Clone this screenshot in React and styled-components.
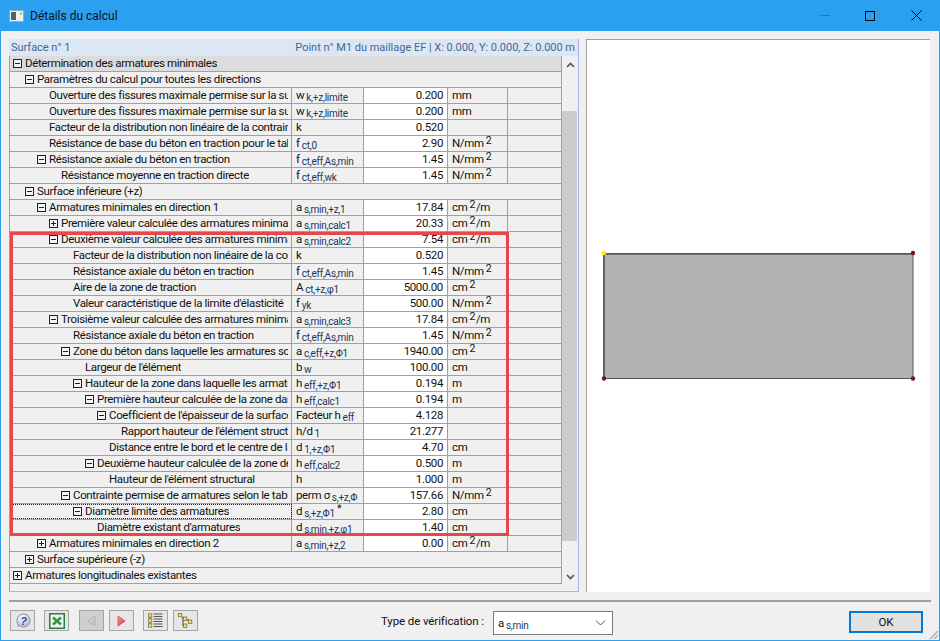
import React from 'react';
import styled, { createGlobalStyle } from 'styled-components';

const GlobalStyle = createGlobalStyle`
  html, body {
    margin: 0;
    padding: 0;
    background: #f0f0f0;
  }
`;

const Window = styled.div`
  box-sizing: border-box;
  width: 940px;
  height: 641px;
  display: flex;
  flex-direction: column;
  position: relative;
  overflow: hidden;
  background: #f0f0f0;
  border: 1px solid #2b9ff0;
  border-top: 0;
  font-family: 'Roboto', 'Liberation Sans', sans-serif;
  font-size: 11.5px;
  letter-spacing: -0.35px;
  color: #111;
`;

const TitleBar = styled.div`
  height: 31px;
  margin: 0 -1px;
  flex: none;
  display: flex;
  align-items: center;
  padding: 0 1px 0 9px;
  background: #2b9ff0;
  font-size: 12px;
  letter-spacing: 0;
`;

const TitleText = styled.span`
  margin-left: 6px;
  flex: 1;
`;

const WinButton = styled.div`
  width: 46px;
  height: 31px;
  display: flex;
  align-items: center;
  justify-content: center;
`;

const Main = styled.div`
  flex: none;
  height: 561px;
  display: flex;
  padding: 8px 9px 0 8px;
  box-sizing: border-box;
  gap: 7px;
`;

const LeftPane = styled.div`
  width: 570px;
  height: 553px;
  box-sizing: border-box;
  flex: none;
  display: flex;
  flex-direction: column;
  border-right: 1px solid #a9b4ec;
  border-bottom: 1px solid #a9b4ec;
`;

const InfoBar = styled.div`
  height: 17px;
  flex: none;
  display: flex;
  justify-content: space-between;
  align-items: center;
  padding: 0 3px 0 2px;
  background: #dce7f5;
  color: #46688f;
  font-size: 11px;
  letter-spacing: -0.02px;
  white-space: nowrap;
`;

const TableWrap = styled.div`
  display: flex;
  flex: 1;
  position: relative;
`;

const Table = styled.div`
  width: 553px;
  flex: none;
  border-left: 1px solid #a0a0a0;
  box-sizing: border-box;
`;

const Row = styled.div`
  height: 16px;
  box-sizing: border-box;
  display: grid;
  grid-template-columns: 282px 72px 84px 60px 1fr;
  border-bottom: 1px solid #a0a0a0;
  border-right: 1px solid #a0a0a0;
  background: ${p => (p.$head ? '#dcdcdc' : '#f0f0f0')};
  line-height: 15px;
`;

const TreeCell = styled.div`
  grid-column: ${p => (p.$span ? '1 / -1' : 'auto')};
  display: flex;
  align-items: center;
  padding-left: ${p => 3 + p.$level * 12}px;
  border-right: ${p => (p.$span ? '0' : '1px solid #a0a0a0')};
  outline: ${p => (p.$focus ? '1px dotted #222' : '0')};
  outline-offset: -1px;
  overflow: hidden;
  white-space: nowrap;
  min-width: 0;
`;

const ToggleSlot = styled.span`
  width: 12px;
  flex: none;
  display: flex;
  align-items: center;
`;

const Toggle = styled.svg`
  width: 9px;
  height: 9px;
  display: block;
`;

const LabelText = styled.span`
  overflow: hidden;
  min-width: 0;
  margin-right: 3px;
`;

const SymbolCell = styled.div`
  border-right: 1px solid #a0a0a0;
  padding-left: 4px;
  white-space: nowrap;
  overflow: hidden;
`;

const ValueCell = styled.div`
  border-right: 1px solid #a0a0a0;
  background: #fff;
  text-align: right;
  padding-right: 4px;
`;

const UnitCell = styled.div`
  border-right: 1px solid #a0a0a0;
  padding-left: 4px;
  white-space: nowrap;
`;

const EmptyCell = styled.div``;

const Sub = styled.span`
  font-size: 10px;
  position: relative;
  top: 2px;
  margin-left: 2px;
  letter-spacing: -0.25px;
  color: #1d3560;
`;

const Sup = styled.span`
  font-size: 10.5px;
  position: relative;
  top: -3px;
  margin: 0 1px 0 2px;
`;

const Highlight = styled.div`
  position: absolute;
  left: 1px;
  top: 176px;
  width: 499px;
  height: 304px;
  box-sizing: border-box;
  border: 3px solid #e8474a;
  pointer-events: none;
`;

const ScrollBar = styled.div`
  flex: 1;
  display: flex;
  flex-direction: column;
  align-items: center;
  justify-content: space-between;
  padding-bottom: 6px;
`;

const ScrollBtn = styled.div`
  height: 17px;
  display: flex;
  align-items: center;
  justify-content: center;
`;

const ScrollTrack = styled.div`
  flex: 1;
  width: 100%;
  padding: 38px 1px 27px 0;
  box-sizing: border-box;
`;

const ScrollThumb = styled.div`
  height: 100%;
  background: #cdcdcd;
`;

const Preview = styled.div`
  width: 344px;
  height: 553px;
  box-sizing: border-box;
  flex: none;
  background: #fff;
  border-top: 1px solid #a0a0a0;
  border-left: 1px solid #a0a0a0;
  display: flex;
  align-items: center;
  justify-content: center;
`;

const Footer = styled.div`
  flex: 1;
  margin: 8px 8px 0;
  border-top: 2px solid #a0a0a0;
  display: flex;
  align-items: flex-start;
  padding: 8px 0 0 1px;
`;

const ToolGroup = styled.div`
  display: flex;
  margin-right: ${p => p.$after || 0}px;
  gap: ${p => p.$gap || 0}px;
`;

const ToolButton = styled.div`
  width: 25px;
  height: 21px;
  box-sizing: border-box;
  border: 1px solid #a4a4a4;
  background: ${p => (p.$off ? '#cfcfcf' : '#e6e6e6')};
  display: flex;
  align-items: center;
  justify-content: center;
`;

const ComboLabel = styled.label`
  margin-left: 183px;
  margin-top: 4px;
  width: 112px;
  letter-spacing: -0.1px;
`;

const Combo = styled.div`
  width: 120px;
  height: 24px;
  margin-top: 1px;
  box-sizing: border-box;
  border: 1px solid #7a7a7a;
  background: #fff;
  display: flex;
  align-items: center;
  justify-content: space-between;
  padding: 0 6px 0 4px;
  line-height: 20px;
`;

const OkButton = styled.button`
  width: 74px;
  height: 22px;
  margin: 1px 8px 0 auto;
  box-sizing: border-box;
  border: 2px solid #0078d7;
  background: #e1e1e1;
  font: inherit;
  letter-spacing: 0;
  color: #111;
  padding: 0;
`;

const Grip = styled.svg`
  position: absolute;
  right: 0;
  bottom: 0;
  width: 12px;
  height: 12px;
`;

const s = (base, sub) => (
  <>
    {base}
    <Sub>{sub}</Sub>
  </>
);

const NMM = <>N/mm<Sup>2</Sup></>;
const CM2 = <>cm<Sup>2</Sup></>;
const CM2M = <>cm<Sup>2</Sup>/m</>;

const rows = [
  { level: 0, t: 'minus', label: 'Détermination des armatures minimales', head: true },
  { level: 1, t: 'minus', label: 'Paramètres du calcul pour toutes les directions' },
  { level: 2, label: 'Ouverture des fissures maximale permise sur la surface', sym: s('w', 'k,+z,limite'), val: '0.200', unit: 'mm' },
  { level: 2, label: 'Ouverture des fissures maximale permise sur la surface', sym: s('w', 'k,+z,limite'), val: '0.200', unit: 'mm' },
  { level: 2, label: 'Facteur de la distribution non linéaire de la contrainte', sym: 'k', val: '0.520' },
  { level: 2, label: 'Résistance de base du béton en traction pour le tableau', sym: s('f', 'ct,0'), val: '2.90', unit: NMM },
  { level: 2, t: 'minus', label: 'Résistance axiale du béton en traction', sym: s('f', 'ct,eff,As,min'), val: '1.45', unit: NMM },
  { level: 3, label: 'Résistance moyenne en traction directe', sym: s('f', 'ct,eff,wk'), val: '1.45', unit: NMM },
  { level: 1, t: 'minus', label: 'Surface inférieure (+z)' },
  { level: 2, t: 'minus', label: 'Armatures minimales en direction 1', sym: s('a', 's,min,+z,1'), val: '17.84', unit: CM2M },
  { level: 3, t: 'plus', label: 'Première valeur calculée des armatures minimales', sym: s('a', 's,min,calc1'), val: '20.33', unit: CM2M },
  { level: 3, t: 'minus', label: 'Deuxième valeur calculée des armatures minimales', sym: s('a', 's,min,calc2'), val: '7.54', unit: CM2M },
  { level: 4, label: 'Facteur de la distribution non linéaire de la contrainte', sym: 'k', val: '0.520' },
  { level: 4, label: 'Résistance axiale du béton en traction', sym: s('f', 'ct,eff,As,min'), val: '1.45', unit: NMM },
  { level: 4, label: 'Aire de la zone de traction', sym: s('A', 'ct,+z,φ1'), val: '5000.00', unit: CM2 },
  { level: 4, label: "Valeur caractéristique de la limite d'élasticité", sym: s('f', 'yk'), val: '500.00', unit: NMM },
  { level: 3, t: 'minus', label: 'Troisième valeur calculée des armatures minimales', sym: s('a', 's,min,calc3'), val: '17.84', unit: CM2M },
  { level: 4, label: 'Résistance axiale du béton en traction', sym: s('f', 'ct,eff,As,min'), val: '1.45', unit: NMM },
  { level: 4, t: 'minus', label: 'Zone du béton dans laquelle les armatures sont', sym: s('a', 'c,eff,+z,Φ1'), val: '1940.00', unit: CM2 },
  { level: 5, label: "Largeur de l'élément", sym: s('b', 'w'), val: '100.00', unit: 'cm' },
  { level: 5, t: 'minus', label: 'Hauteur de la zone dans laquelle les armatures', sym: s('h', 'eff,+z,Φ1'), val: '0.194', unit: 'm' },
  { level: 6, t: 'minus', label: 'Première hauteur calculée de la zone dans', sym: s('h', 'eff,calc1'), val: '0.194', unit: 'm' },
  { level: 7, t: 'minus', label: "Coefficient de l'épaisseur de la surface", sym: s('Facteur h', 'eff'), val: '4.128' },
  { level: 8, label: "Rapport hauteur de l'élément structural", sym: s('h/d', '1'), val: '21.277' },
  { level: 7, label: 'Distance entre le bord et le centre de la', sym: s('d', '1,+z,Φ1'), val: '4.70', unit: 'cm' },
  { level: 6, t: 'minus', label: 'Deuxième hauteur calculée de la zone de', sym: s('h', 'eff,calc2'), val: '0.500', unit: 'm' },
  { level: 7, label: "Hauteur de l'élément structural", sym: 'h', val: '1.000', unit: 'm' },
  { level: 4, t: 'minus', label: 'Contrainte permise de armatures selon le tableau', sym: <>perm σ<Sub>s,+z,Φ</Sub></>, val: '157.66', unit: NMM },
  { level: 5, t: 'minus', label: 'Diamètre limite des armatures', sym: <>d<Sub>s,+z,Φ1</Sub><Sup>*</Sup></>, val: '2.80', unit: 'cm', focus: true },
  { level: 6, label: "Diamètre existant d'armatures", sym: s('d', 's,min,+z,φ1'), val: '1.40', unit: 'cm' },
  { level: 2, t: 'plus', label: 'Armatures minimales en direction 2', sym: s('a', 's,min,+z,2'), val: '0.00', unit: CM2M },
  { level: 1, t: 'plus', label: 'Surface supérieure (-z)' },
  { level: 0, t: 'plus', label: 'Armatures longitudinales existantes' },
];

const TreeToggle = ({ type }) => (
  <Toggle viewBox="0 0 9 9">
    <rect x="0.5" y="0.5" width="8" height="8" fill="#f4f4f4" stroke="#222" />
    <path d={type === 'plus' ? 'M2 4.5h5M4.5 2v5' : 'M2 4.5h5'} stroke="#222" fill="none" />
  </Toggle>
);

const TableRow = ({ row }) => {
  const span = row.val === undefined;
  return (
    <Row $head={row.head}>
      <TreeCell $level={row.level} $span={span} $focus={row.focus}>
        <ToggleSlot>{row.t && <TreeToggle type={row.t} />}</ToggleSlot>
        <LabelText>{row.label}</LabelText>
      </TreeCell>
      {!span && (
        <>
          <SymbolCell>{row.sym}</SymbolCell>
          <ValueCell>{row.val}</ValueCell>
          <UnitCell>{row.unit}</UnitCell>
          <EmptyCell />
        </>
      )}
    </Row>
  );
};

const Chevron = ({ up }) => (
  <svg width="9" height="6" viewBox="0 0 9 6">
    <path d={up ? 'M1 5l3.5-3.5L8 5' : 'M1 1l3.5 3.5L8 1'} fill="none" stroke="#555" strokeWidth="1.6" />
  </svg>
);

const AppIcon = () => (
  <svg width="15" height="14" viewBox="0 0 15 14">
    <rect x="0.5" y="1.5" width="14" height="11" fill="#eef2f2" stroke="#9aa" />
    <rect x="2" y="3" width="5" height="8" fill="#3f6f66" />
    <rect x="11" y="3" width="2" height="3" fill="#9cc" />
  </svg>
);

const HelpIcon = () => (
  <svg width="16" height="16" viewBox="0 0 16 16">
    <defs>
      <radialGradient id="helpGlow" cx="0.4" cy="0.3" r="0.8">
        <stop offset="0" stopColor="#ffffff" />
        <stop offset="1" stopColor="#a9b2c4" />
      </radialGradient>
    </defs>
    <path d="M2 14l1.2-3.2 2.2 1.8z" fill="#8f99ad" />
    <circle cx="8.5" cy="7.5" r="6.6" fill="url(#helpGlow)" stroke="#8a94a8" />
    <text x="8.5" y="11.5" textAnchor="middle" fontFamily="Liberation Sans, sans-serif" fontWeight="700" fontStyle="italic" fontSize="11" fill="#2b4a9a">?</text>
  </svg>
);

const ExcelIcon = () => (
  <svg width="16" height="16" viewBox="0 0 16 16">
    <rect x="0.75" y="0.75" width="14.5" height="14.5" fill="#edf5ea" stroke="#2a7d3a" strokeWidth="1.5" />
    <path d="M4 4.5l8 7M12 4.5l-8 7" stroke="#2f9a48" strokeWidth="2.6" />
  </svg>
);

const Triangle = ({ left, id, from, to, edge }) => (
  <svg width="9" height="12" viewBox="0 0 9 12">
    <defs>
      <linearGradient id={id} x1="0" y1="0" x2="1" y2="1">
        <stop offset="0" stopColor={from} />
        <stop offset="1" stopColor={to} />
      </linearGradient>
    </defs>
    <path d={left ? 'M8 1v10L1 6z' : 'M1 1v10l7-5z'} fill={`url(#${id})`} stroke={edge} strokeWidth="0.8" />
  </svg>
);

const Node = ({ x, y }) => (
  <rect x={x} y={y} width="3.4" height="3.4" fill="#f2e27a" stroke="#7d7232" strokeWidth="0.8" />
);

const ListIcon = () => (
  <svg width="15" height="15" viewBox="0 0 15 15">
    <path d="M2 2v11" stroke="#555" />
    {[0.8, 5.8, 10.8].map(y => (
      <g key={y}>
        <Node x={0.4} y={y} />
        <path d={`M5.5 ${y + 0.2}h9M5.5 ${y + 2.7}h9`} stroke="#555" />
      </g>
    ))}
  </svg>
);

const TreeIcon = () => (
  <svg width="15" height="15" viewBox="0 0 15 15">
    <path d="M2 2l3 3v8h2M5 5l2 0.5 5 2.5" fill="none" stroke="#444" />
    <Node x={0.4} y={0.4} />
    <Node x={5.4} y={4} />
    <Node x={10.4} y={7} />
    <Node x={5.4} y={11} />
  </svg>
);

const Drawing = () => (
  <svg width="317" height="132" viewBox="0 0 317 132">
    <rect x="4" y="3.5" width="309" height="125" fill="#b2b2b2" />
    <path d="M4 128.5V4H313" fill="none" stroke="#6e6e6e" strokeWidth="2" />
    <path d="M4 3.5H313V128.5H4z" fill="none" stroke="#555" strokeWidth="1" />
    <circle cx="4" cy="3" r="2.2" fill="#ffee00" />
    <circle cx="313" cy="3" r="2.2" fill="#7a1414" />
    <circle cx="4" cy="128.5" r="2.2" fill="#7a1414" />
    <circle cx="313" cy="128.5" r="2.2" fill="#7a1414" />
  </svg>
);

const App = () => (
  <Window>
    <GlobalStyle />
    <TitleBar>
      <AppIcon />
      <TitleText>Détails du calcul</TitleText>
      <WinButton>
        <svg width="11" height="1"><rect width="11" height="1" fill="#1c7fc6" /></svg>
      </WinButton>
      <WinButton>
        <svg width="10" height="10"><rect x="0.5" y="0.5" width="9" height="9" fill="none" stroke="#000" /></svg>
      </WinButton>
      <WinButton>
        <svg width="11" height="11"><path d="M0.5 0.5l10 10M10.5 0.5l-10 10" stroke="#000" /></svg>
      </WinButton>
    </TitleBar>
    <Main>
      <LeftPane>
        <InfoBar>
          <span>Surface n° 1</span>
          <span>Point n° M1 du maillage EF | X: 0.000, Y: 0.000, Z: 0.000 m</span>
        </InfoBar>
        <TableWrap>
          <Table>
            {rows.map((row, i) => (
              <TableRow key={i} row={row} />
            ))}
          </Table>
          <ScrollBar>
            <ScrollBtn><Chevron up /></ScrollBtn>
            <ScrollTrack><ScrollThumb /></ScrollTrack>
            <ScrollBtn><Chevron /></ScrollBtn>
          </ScrollBar>
          <Highlight />
        </TableWrap>
      </LeftPane>
      <Preview>
        <Drawing />
      </Preview>
    </Main>
    <Footer>
      <ToolGroup $after={9}>
        <ToolButton><HelpIcon /></ToolButton>
      </ToolGroup>
      <ToolGroup $after={10}>
        <ToolButton><ExcelIcon /></ToolButton>
      </ToolGroup>
      <ToolGroup $after={9} $gap={5}>
        <ToolButton $off><Triangle left id="prevFill" from="#e4e4e4" to="#b8b8b8" edge="#adadad" /></ToolButton>
        <ToolButton><Triangle id="nextFill" from="#f7a6a6" to="#dc2c2c" edge="#c84a4a" /></ToolButton>
      </ToolGroup>
      <ToolGroup $gap={5}>
        <ToolButton><ListIcon /></ToolButton>
        <ToolButton><TreeIcon /></ToolButton>
      </ToolGroup>
      <ComboLabel>Type de vérification :</ComboLabel>
      <Combo>
        <span>{s('a', 's,min')}</span>
        <svg width="11" height="6" viewBox="0 0 11 6">
          <path d="M1 0.5l4.5 4.5L10 0.5" fill="none" stroke="#555" />
        </svg>
      </Combo>
      <OkButton>OK</OkButton>
    </Footer>
    <Grip viewBox="0 0 12 12">
      <path d="M11 3L3 11M11 7l-4 4" stroke="#b0b0b0" strokeWidth="1.5" />
    </Grip>
  </Window>
);

export default App;
